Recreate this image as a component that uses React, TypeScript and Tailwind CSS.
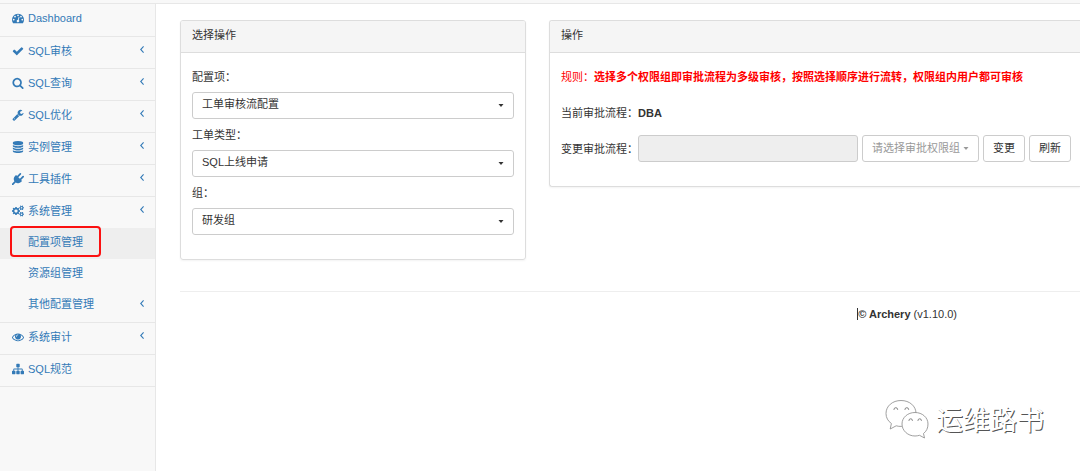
import { useState, type ReactNode } from "react";

interface NavItem {
  label: string;
  icon: string;
  expandable?: boolean;
  children?: { label: string; active?: boolean; expandable?: boolean }[];
}

// Icon outlines on a 1792 x 1792 grid (cogs is a little wider)
const ICONS = {
  dashboard:
    "M384 1152q0-53-37.5-90.5t-90.5-37.5-90.5 37.5-37.5 90.5 37.5 90.5 90.5 37.5 90.5-37.5 37.5-90.5zm192-448q0-53-37.5-90.5t-90.5-37.5-90.5 37.5-37.5 90.5 37.5 90.5 90.5 37.5 90.5-37.5 37.5-90.5zm428 481l101-382q6-26-7.5-48.5t-38.5-29.5-48 6.5-30 39.5l-101 382q-60 5-107 43.5t-63 98.5q-20 77 20 146t117 89 146-20 89-117q16-60-6-117t-72-91zm660-33q0-53-37.5-90.5t-90.5-37.5-90.5 37.5-37.5 90.5 37.5 90.5 90.5 37.5 90.5-37.5 37.5-90.5zm-640-640q0-53-37.5-90.5t-90.5-37.5-90.5 37.5-37.5 90.5 37.5 90.5 90.5 37.5 90.5-37.5 37.5-90.5zm448 192q0-53-37.5-90.5t-90.5-37.5-90.5 37.5-37.5 90.5 37.5 90.5 90.5 37.5 90.5-37.5 37.5-90.5zm320 448q0 261-141 483-19 29-54 29h-1402q-35 0-54-29-141-221-141-483 0-182 71-348t191-286 286-191 348-71 348 71 286 191 191 286 71 348z",
  check:
    "M1671 566q0 40-28 68l-724 724-136 136q-28 28-68 28t-68-28l-136-136-362-362q-28-28-28-68t28-68l136-136q28-28 68-28t68 28l294 295 656-657q28-28 68-28t68 28l136 136q28 28 28 68z",
  search:
    "M1216 832q0-185-131.5-316.5t-316.5-131.5-316.5 131.5-131.5 316.5 131.5 316.5 316.5 131.5 316.5-131.5 131.5-316.5zm512 832q0 52-38 90t-90 38q-54 0-90-38l-343-342q-179 124-399 124-143 0-273.5-55.5t-225-150-150-225-55.5-273.5 55.5-273.5 150-225 225-150 273.5-55.5 273.5 55.5 225 150 150 225 55.5 273.5q0 220-124 399l343 343q37 37 37 90z",
  wrench:
    "M448 1472q0-26-19-45t-45-19-45 19-19 45 19 45 45 19 45-19 19-45zm644-420l-682 682q-37 37-90 37-52 0-91-37l-106-108q-38-36-38-90 0-53 38-91l681-681q39 98 114.5 173.5t173.5 114.5zm634-435q0 39-23 106-47 134-164.5 217.5t-258.5 83.5q-185 0-316.5-131.5t-131.5-316.5 131.5-316.5 316.5-131.5q58 0 121.5 16.5t107.5 46.5q16 11 16 28t-16 28l-293 169v224l193 107q5-3 79-48.5t135.5-81 70.5-35.5q15 0 23.5 10t8.5 25z",
  database:
    "M896 768q237 0 443-43t325-127v170q0 69-103 128t-280 93.5-385 34.5-385-34.5-280-93.5-103-128v-170q119 84 325 127t443 43zm0 768q237 0 443-43t325-127v170q0 69-103 128t-280 93.5-385 34.5-385-34.5-280-93.5-103-128v-170q119 84 325 127t443 43zm0-384q237 0 443-43t325-127v170q0 69-103 128t-280 93.5-385 34.5-385-34.5-280-93.5-103-128v-170q119 84 325 127t443 43zm0-1152q208 0 385 34.5t280 93.5 103 128v128q0 69-103 128t-280 93.5-385 34.5-385-34.5-280-93.5-103-128v-128q0-69 103-128t280-93.5 385-34.5z",
  plug: "M1755 453q37 38 37 90.5t-37 90.5l-401 400 150 150-160 160q-163 163-389.5 186.5t-411.5-100.5l-362 362h-181v-181l362-362q-124-185-100.5-411.5t186.5-389.5l160-160 150 150 400-401q38-37 91-37t90 37 37 90.5-37 90.5l-400 401 234 234 401-400q38-37 91-37t90 37z",
  cogs: "M896 896q0-106-75-181t-181-75-181 75-75 181 75 181 181 75 181-75 75-181zm768 512q0-52-38-90t-90-38-90 38-38 90q0 53 37.5 90.5t90.5 37.5 90.5-37.5 37.5-90.5zm0-1024q0-52-38-90t-90-38-90 38-38 90q0 53 37.5 90.5t90.5 37.5 90.5-37.5 37.5-90.5zm-384 421v185q0 10-7 19.5t-16 10.5l-155 24q-11 35-32 76 34 48 90 115 7 11 7 20 0 12-7 19-23 30-82.5 89.5t-78.5 59.5q-11 0-21-7l-115-90q-37 19-77 31-11 108-23 155-7 24-30 24h-186q-11 0-20-7.5t-10-17.5l-23-153q-34-10-75-31l-118 89q-7 7-20 7-11 0-21-8-144-133-144-160 0-9 7-19 10-14 41-53t47-61q-23-44-35-82l-152-24q-10-1-17-9.5t-7-19.5v-185q0-10 7-19.5t16-10.5l155-24q11-35 32-76-34-48-90-115-7-11-7-20 0-12 7-20 22-30 82-89t79-59q11 0 21 7l115 90q34-18 77-32 11-108 23-154 7-24 30-24h186q11 0 20 7.5t10 17.5l23 153q34 10 75 31l118-89q8-7 20-7 11 0 21 8 144 133 144 160 0 8-7 19-12 16-42 54t-45 60q23 48 34 82l152 23q10 2 17 10.5t7 19.5zm640 533v140q0 16-149 31-12 27-30 52 51 113 51 138 0 4-4 7-122 71-124 71-8 0-46-47t-52-68q-20 2-30 2t-30-2q-14 21-52 68t-46 47q-2 0-124-71-4-3-4-7 0-25 51-138-18-25-30-52-149-15-149-31v-140q0-16 149-31 13-29 30-52-51-113-51-138 0-4 4-7 4-2 35-20t59-34 30-16q8 0 46 46.5t52 67.5q20-2 30-2t30 2q51-71 92-112l6-2q4 0 124 70 4 3 4 7 0 25-51 138 17 23 30 52 149 15 149 31zm0-1024v140q0 16-149 31-12 27-30 52 51 113 51 138 0 4-4 7-122 71-124 71-8 0-46-47t-52-68q-20 2-30 2t-30-2q-14 21-52 68t-46 47q-2 0-124-71-4-3-4-7 0-25 51-138-18-25-30-52-149-15-149-31v-140q0-16 149-31 13-29 30-52-51-113-51-138 0-4 4-7 4-2 35-20t59-34 30-16q8 0 46 46.5t52 67.5q20-2 30-2t30 2q51-71 92-112l6-2q4 0 124 70 4 3 4 7 0 25-51 138 17 23 30 52 149 15 149 31z",
  eye: "M1664 960q-152-236-381-353 61 104 61 225 0 185-131.5 316.5t-316.5 131.5-316.5-131.5-131.5-316.5q0-121 61-225-229 117-381 353 133 205 333.5 326.5t434.5 121.5 434.5-121.5 333.5-326.5zm-720-384q0-20-14-34t-34-14q-125 0-214.5 89.5t-89.5 214.5q0 20 14 34t34 14 34-14 14-34q0-86 61-147t147-61q20 0 34-14t14-34zm848 384q0 34-20 69-140 230-376.5 368.5t-499.5 138.5-499.5-139-376.5-368q-20-35-20-69t20-69q140-229 376.5-368t499.5-139 499.5 139 376.5 368q20 35 20 69z",
  sitemap:
    "M1792 1248v320q0 40-28 68t-68 28h-320q-40 0-68-28t-28-68v-320q0-40 28-68t68-28h96v-192h-512v192h96q40 0 68 28t28 68v320q0 40-28 68t-68 28h-320q-40 0-68-28t-28-68v-320q0-40 28-68t68-28h96v-192h-512v192h96q40 0 68 28t28 68v320q0 40-28 68t-68 28h-320q-40 0-68-28t-28-68v-320q0-40 28-68t68-28h96v-192q0-52 38-90t90-38h512v-192h-96q-40 0-68-28t-28-68v-320q0-40 28-68t68-28h320q40 0 68 28t28 68v320q0 40-28 68t-68 28h-96v192h512q52 0 90 38t38 90v192h96q40 0 68 28t28 68z",
};

const NAV: NavItem[] = [
  { label: "Dashboard", icon: ICONS.dashboard },
  { label: "SQL审核", icon: ICONS.check, expandable: true },
  { label: "SQL查询", icon: ICONS.search, expandable: true },
  { label: "SQL优化", icon: ICONS.wrench, expandable: true },
  { label: "实例管理", icon: ICONS.database, expandable: true },
  { label: "工具插件", icon: ICONS.plug, expandable: true },
  {
    label: "系统管理",
    icon: ICONS.cogs,
    expandable: true,
    children: [
      { label: "配置项管理", active: true },
      { label: "资源组管理" },
      { label: "其他配置管理", expandable: true },
    ],
  },
  { label: "系统审计", icon: ICONS.eye, expandable: true },
  { label: "SQL规范", icon: ICONS.sitemap },
];

function NavIcon({ path }: { path: string }) {
  const width = path === ICONS.cogs ? 1920 : 1792;
  return (
    <svg
      viewBox={`0 0 ${width} 1792`}
      className="mr-1 h-3 w-3 shrink-0 fill-current"
      aria-hidden="true"
    >
      <path d={path} />
    </svg>
  );
}

function AngleLeft() {
  return (
    <svg
      viewBox="0 0 4 7"
      className="mr-[11px] mb-[2px] ml-auto h-[7px] w-1"
      fill="none"
      stroke="currentColor"
      strokeWidth="1.1"
      aria-hidden="true"
    >
      <path d="M3.6 0.4 L0.7 3.5 L3.6 6.6" />
    </svg>
  );
}

function Caret() {
  return (
    <svg viewBox="0 0 6 3" className="h-[3px] w-[6px] fill-current" aria-hidden="true">
      <path d="M0.500 0h5L3 3z" />
    </svg>
  );
}

function Sidebar() {
  return (
    <nav className="w-[156px] shrink-0 border-r border-[#e7e7e7] bg-[#f8f8f8] text-[#337ab7]">
      <ul>
        {NAV.map((item) => (
          <li
            key={item.label}
            className="border-b border-[#e7e7e7] first:pb-px"
          >
            <a href="#" className="flex h-[31px] items-center pb-1 pl-3">
              <NavIcon path={item.icon} />
              {item.label}
              {item.expandable && <AngleLeft />}
            </a>
            {item.children && (
              <ul className="pb-px">
                {item.children.map((child) => (
                  <li key={child.label} className="relative">
                    <a
                      href="#"
                      className={`flex h-[31px] items-center pb-[3px] pl-7 ${
                        child.active ? "bg-[#eee]" : ""
                      }`}
                    >
                      {child.label}
                      {child.expandable && <AngleLeft />}
                    </a>
                    {child.active && (
                      <span className="absolute -top-0.5 left-[10px] h-[31px] w-[91px] rounded-sm border-2 border-[#fb1010]" />
                    )}
                  </li>
                ))}
              </ul>
            )}
          </li>
        ))}
      </ul>
    </nav>
  );
}

interface SelectFieldProps {
  id: string;
  label: string;
  options: string[];
}

function SelectField({ id, label, options }: SelectFieldProps) {
  const [value, setValue] = useState(options[0]);

  return (
    <div>
      <label htmlFor={id} className="mb-[7px] block">
        {label}
      </label>
      <div className="relative">
        <select
          id={id}
          value={value}
          onChange={(e) => setValue(e.target.value)}
          className="block h-[27px] w-full appearance-none rounded-[3px] border border-[#ccc] bg-white px-[9px] pb-[3px]"
        >
          {options.map((option) => (
            <option key={option}>{option}</option>
          ))}
        </select>
        <span className="pointer-events-none absolute top-3 right-[10px]">
          <Caret />
        </span>
      </div>
    </div>
  );
}

function PanelHeading({ children }: { children: ReactNode }) {
  return (
    <h2 className="h-8 border-b border-[#ddd] bg-[#f5f5f5] px-[11px] pt-[6px]">
      {children}
    </h2>
  );
}

function WechatMark() {
  return (
    <svg viewBox="0 0 46 40" className="h-10 w-[46px]" aria-hidden="true">
      <g fill="#fff" stroke="#888" strokeWidth="0.8" strokeLinejoin="round">
        <path d="M17 1.500C8.500 1.500 2 7 2 14.500c0 4.200 2 7.600 5.400 10L6.200 30l6-3.200c1.700.5 3.500.7 5.300.6 10 0 14.500-5 14.500-13C32 7 25.500 1.500 17 1.500z" />
        <path d="M31 13.500c-7.300 0-13 5-13 11.500s5.700 12 13 12c1.600 0 3.100-.3 4.500-.7l5 2.700-1-4.500c3-2.200 4.500-5.500 4.500-9.500 0-6.500-5.700-11.500-13-11.500z" />
      </g>
      <g fill="none" stroke="#777" strokeWidth="0.9">
        <path d="M10 11v-.5a1.800 1.800 0 0 1 3.600 0v.5" />
        <path d="M21 11v-.5a1.800 1.800 0 0 1 3.600 0v.5" />
        <path d="M25 22v-.5a1.700 1.700 0 0 1 3.400 0v.5" />
        <path d="M34 22v-.5a1.700 1.700 0 0 1 3.400 0v.5" />
      </g>
    </svg>
  );
}

const BUTTON =
  "h-[27px] shrink-0 rounded-[3px] border border-[#ccc] bg-white px-[9px] pb-[2px]";

export default function App() {
  return (
    <div className="flex min-h-screen flex-col overflow-hidden bg-white font-['Liberation_Sans','Noto_Sans_CJK_SC',sans-serif] text-[11px] leading-4 text-[#333]">
      <header className="h-1 border-b border-[#e7e7e7] bg-[#f8f8f8]" />
      <div className="flex flex-1">
        <Sidebar />
        <main className="min-w-0 flex-1 pt-4 pl-6">
          <div className="flex items-start gap-[23px]">
            <section className="w-[346px] shrink-0 overflow-hidden rounded-[3px] border border-[#ddd] shadow-xs">
              <PanelHeading>选择操作</PanelHeading>
              <form className="flex flex-col gap-2 px-[11px] pt-4 pb-6">
                <SelectField
                  id="config-item"
                  label="配置项："
                  options={["工单审核流配置"]}
                />
                <SelectField
                  id="workflow-type"
                  label="工单类型："
                  options={["SQL上线申请"]}
                />
                <SelectField id="group" label="组：" options={["研发组"]} />
              </form>
            </section>

            {/* Runs off the right edge of the window */}
            <section className="min-w-0 flex-1 overflow-hidden rounded-l-[3px] border border-r-0 border-[#ddd] shadow-xs">
              <PanelHeading>操作</PanelHeading>
              <div className="px-[11px] pt-4 pb-6">
                <p className="text-[#f00]">
                  规则：
                  <b>
                    选择多个权限组即审批流程为多级审核，按照选择顺序进行流转，权限组内用户都可审核
                  </b>
                </p>
                <p className="mt-5">
                  当前审批流程：<b>DBA</b>
                </p>
                <form className="mt-[14px] flex items-center gap-1 whitespace-nowrap">
                  <div className="flex items-center">
                    <label htmlFor="audit-flow">变更审批流程：</label>
                    <input
                      id="audit-flow"
                      type="text"
                      disabled
                      className="h-[27px] w-[220px] rounded-[3px] border border-[#ccc] bg-[#eee] px-[9px]"
                    />
                  </div>
                  <div className="relative shrink-0 text-[#999]">
                    <select
                      aria-label="请选择审批权限组"
                      className="block h-[27px] w-[117px] appearance-none rounded-[3px] border border-[#ccc] bg-white px-[9px] pb-[2px]"
                    >
                      <option>请选择审批权限组</option>
                    </select>
                    <span className="pointer-events-none absolute top-3 right-[10px]">
                      <Caret />
                    </span>
                  </div>
                  <button type="button" className={BUTTON}>
                    变更
                  </button>
                  <button type="button" className={BUTTON}>
                    刷新
                  </button>
                </form>
              </div>
            </section>
          </div>

          <footer className="mt-[31px] border-t border-[#eee] pt-[14px] pr-[123px]">
            <p className="flex items-center justify-end">
              <span className="h-3 w-px bg-[#333]" />
              <span>
                <b>© Archery</b> (v1.10.0)
              </span>
            </p>
          </footer>
        </main>
      </div>

      <div className="absolute right-9 bottom-[30px] flex items-center gap-[6px] text-[27px] leading-10 text-white [text-shadow:1px_1px_0_#555]">
        <WechatMark />
        <span className="pt-1">运维路书</span>
      </div>
    </div>
  );
}
